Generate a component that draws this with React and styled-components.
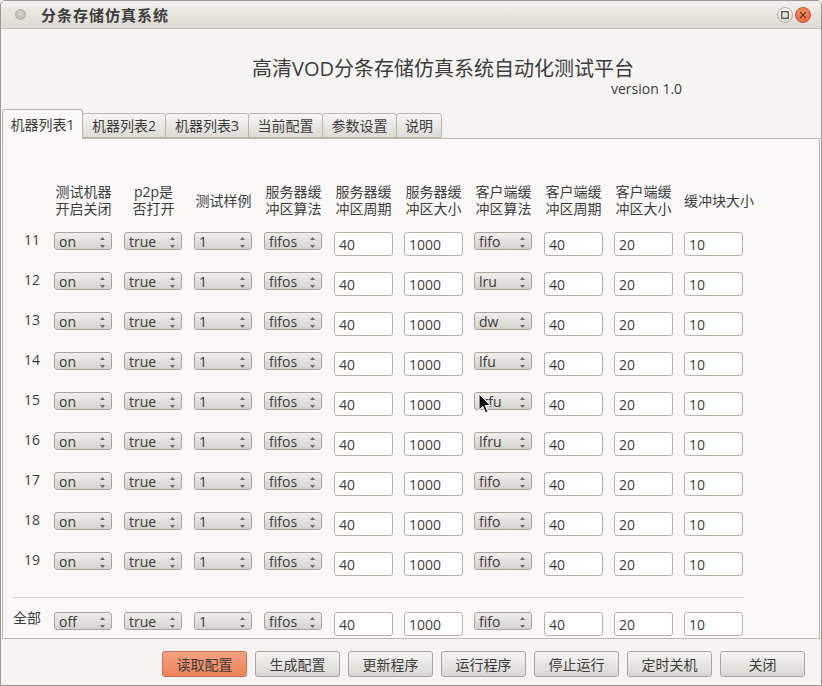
import React from 'react';
import styled, { createGlobalStyle } from 'styled-components';

const FONT = `"Open Sans", "Noto Sans CJK SC", sans-serif`;

const Global = createGlobalStyle`
  html, body { margin: 0; padding: 0; background: #f5f4f2; }
  body { font-family: ${FONT}; color: #3c3c3c; }
  * { box-sizing: border-box; }
`;

const Window = styled.div`
  position: relative;
  width: 822px;
  height: 686px;
  border: 1px solid #9d9890;
  border-radius: 5px 5px 0 0;
  background: #f5f4f2;
  display: flex;
  flex-direction: column;
  overflow: hidden;
`;

const TitleBar = styled.div`
  height: 28px;
  flex: none;
  display: flex;
  align-items: center;
  padding: 0 10px 0 14px;
  background: linear-gradient(#f2f0ed, #dedad3);
  border-bottom: 1px solid #c4bfb6;
`;

const Dot = styled.span`
  width: 11px;
  height: 11px;
  border-radius: 50%;
  background: radial-gradient(circle at 50% 40%, #d8d6d2, #b3b0aa);
  border: 1px solid #b0ada7;
  margin-right: 15px;
`;

const TitleText = styled.span`
  font-weight: 700;
  font-size: 15px;
  letter-spacing: 1px;
  color: #3c3c3c;
  line-height: 20px;
`;

const WinControls = styled.div`
  margin-left: auto;
  display: flex;
  gap: 2px;
  align-items: center;
`;

const RoundBtn = styled.span`
  width: 16px;
  height: 16px;
  border-radius: 50%;
  display: flex;
  align-items: center;
  justify-content: center;
  border: 1px solid ${p => (p.$close ? '#c65430' : '#b4b0a8')};
  background: ${p =>
    p.$close
      ? 'radial-gradient(circle at 50% 35%, #f7936a, #e45d2f)'
      : 'linear-gradient(#f9f8f6, #dcd9d3)'};
`;

const Header = styled.div`
  flex: none;
  padding-left: 251px;
  margin-top: 28px;
  font-size: 20px;
  line-height: 24px;
  white-space: nowrap;
`;

const Version = styled.div`
  flex: none;
  padding-left: 610px;
  font-size: 14px;
  line-height: 15px;
  white-space: nowrap;
`;

const TabBar = styled.div`
  flex: none;
  margin-top: 13px;
  height: 29px;
  display: flex;
  align-items: flex-end;
  padding-left: 1px;
`;

const Tab = styled.div`
  position: relative;
  width: ${p => p.$w}px;
  height: ${p => (p.$active ? 30 : 25)}px;
  margin-right: -1px;
  margin-bottom: ${p => (p.$active ? -1 : 0)}px;
  z-index: ${p => (p.$active ? 2 : 1)};
  border: 1px solid #b9b4ac;
  border-bottom: ${p => (p.$active ? 'none' : '1px solid #b9b4ac')};
  border-radius: 3px 3px 0 0;
  background: ${p => (p.$active ? '#faf9f8' : 'linear-gradient(#f6f5f3, #dedbd6)')};
  display: flex;
  align-items: center;
  justify-content: center;
  padding-bottom: ${p => (p.$active ? 2 : 1)}px;
  font-size: 14px;
  white-space: nowrap;
`;

const Pane = styled.div`
  flex: none;
  margin: 0 1px;
  height: 501px;
  border: 1px solid #bcb7af;
  background: #faf9f8;
  padding: 44px 0 0 10px;
  display: flex;
  flex-direction: column;
`;

const GridRow = styled.div`
  display: grid;
  grid-template-columns: 30px repeat(10, 59px);
  column-gap: 11px;
  align-items: ${p => (p.$head ? 'center' : 'start')};
  height: ${p => (p.$head ? 34 : 24)}px;
  margin-bottom: ${p => (p.$head ? 15 : p.$last ? 0 : 16)}px;
`;

const HeadCell = styled.div`
  font-size: 14px;
  line-height: 17px;
  color: #3c3c3c;
  text-align: ${p => (p.$left ? 'left' : 'center')};
  white-space: nowrap;
`;

const RowLabel = styled.div`
  font-size: 14px;
  line-height: 17px;
  padding-left: ${p => p.$indent}px;
  margin-top: ${p => p.$dy}px;
  white-space: nowrap;
`;

const Combo = styled.div`
  position: relative;
  width: 58px;
  height: 18px;
  border: 1px solid #a8a49c;
  border-radius: 3px;
  background: linear-gradient(#efeeeb, #d6d3ce);
  font-size: 14px;
  line-height: 15px;
  padding-left: 4px;
  display: flex;
  align-items: center;
  white-space: nowrap;
`;

const ComboArrows = styled.svg`
  position: absolute;
  right: 5px;
  top: 2px;
`;

const Field = styled.input`
  width: 59px;
  height: 24px;
  border: 1px solid #b6b0a7;
  border-radius: 3px;
  background: #fff;
  font-family: ${FONT};
  font-size: 14px;
  color: #3c3c3c;
  padding: 1px 0 0 4px;
  margin: 0;
  outline: none;
`;

const Separator = styled.div`
  width: 731px;
  height: 1px;
  background: #d3cec7;
  margin: 5px 0 14px 0;
`;

const ButtonRow = styled.div`
  flex: none;
  margin-top: 12px;
  display: flex;
  justify-content: flex-end;
  gap: 8px;
  padding-right: 16px;
`;

const Button = styled.div`
  width: 85px;
  height: 26px;
  border: 1px solid ${p => (p.$primary ? '#c9704e' : '#a9a59d')};
  border-radius: 3px;
  background: ${p =>
    p.$primary ? 'linear-gradient(#f6a382, #ed8259)' : 'linear-gradient(#f6f5f3, #dad7d2)'};
  display: flex;
  align-items: center;
  justify-content: center;
  font-size: 14px;
  white-space: nowrap;
`;

const Cursor = styled.svg`
  position: absolute;
  left: 477px;
  top: 392px;
  pointer-events: none;
`;

const ComboBox = ({ value }) => (
  <Combo>
    {value}
    <ComboArrows width="7" height="14" viewBox="0 0 7 14">
      <path d="M1 5 L3.5 2 L6 5 Z" fill="#6a6864" />
      <path d="M1 10 L3.5 13 L6 10 Z" fill="#6a6864" />
    </ComboArrows>
  </Combo>
);

const headers = [
  ['测试机器', '开启关闭'],
  ['p2p是', '否打开'],
  ['测试样例'],
  ['服务器缓', '冲区算法'],
  ['服务器缓', '冲区周期'],
  ['服务器缓', '冲区大小'],
  ['客户端缓', '冲区算法'],
  ['客户端缓', '冲区周期'],
  ['客户端缓', '冲区大小'],
  ['缓冲块大小'],
];

const clientAlg = ['fifo', 'lru', 'dw', 'lfu', 'lrfu', 'lfru', 'fifo', 'fifo', 'fifo'];

const rows = clientAlg.map((alg, i) => ({
  label: String(11 + i),
  onoff: 'on',
  alg,
}));

const tabs = [
  { t: '机器列表1', w: 81, active: true },
  { t: '机器列表2', w: 84 },
  { t: '机器列表3', w: 84 },
  { t: '当前配置', w: 75 },
  { t: '参数设置', w: 75 },
  { t: '说明', w: 46 },
];

const buttons = ['读取配置', '生成配置', '更新程序', '运行程序', '停止运行', '定时关机', '关闭'];

const DataCells = ({ onoff, alg }) => (
  <>
    <ComboBox value={onoff} />
    <ComboBox value="true" />
    <ComboBox value="1" />
    <ComboBox value="fifos" />
    <Field readOnly defaultValue="40" />
    <Field readOnly defaultValue="1000" />
    <ComboBox value={alg} />
    <Field readOnly defaultValue="40" />
    <Field readOnly defaultValue="20" />
    <Field readOnly defaultValue="10" />
  </>
);

export default function App() {
  return (
    <>
      <Global />
      <Window>
        <TitleBar>
          <Dot />
          <TitleText>分条存储仿真系统</TitleText>
          <WinControls>
            <RoundBtn>
              <svg width="8" height="8" viewBox="0 0 8 8">
                <rect x="0.75" y="0.75" width="6.5" height="6.5" fill="none" stroke="#4a4a4a" strokeWidth="1.2" />
              </svg>
            </RoundBtn>
            <RoundBtn $close>
              <svg width="8" height="8" viewBox="0 0 8 8">
                <path d="M1.2 1.2 L6.8 6.8 M6.8 1.2 L1.2 6.8" stroke="#4a2e22" strokeWidth="1.2" />
              </svg>
            </RoundBtn>
          </WinControls>
        </TitleBar>

        <Header>高清VOD分条存储仿真系统自动化测试平台</Header>
        <Version>version 1.0</Version>

        <TabBar>
          {tabs.map(tb => (
            <Tab key={tb.t} $w={tb.w} $active={tb.active}>
              {tb.t}
            </Tab>
          ))}
        </TabBar>

        <Pane>
          <GridRow $head>
            <span />
            {headers.map((h, i) => (
              <HeadCell key={i} $left={i === headers.length - 1}>
                {h.map((line, j) => (
                  <div key={j}>{line}</div>
                ))}
              </HeadCell>
            ))}
          </GridRow>

          {rows.map(r => (
            <GridRow key={r.label}>
              <RowLabel $indent={11} $dy={-1}>{r.label}</RowLabel>
              <DataCells onoff={r.onoff} alg={r.alg} />
            </GridRow>
          ))}

          <Separator />

          <GridRow $last>
            <RowLabel $indent={0} $dy={-3}>全部</RowLabel>
            <DataCells onoff="off" alg="fifo" />
          </GridRow>
        </Pane>

        <ButtonRow>
          {buttons.map((b, i) => (
            <Button key={b} $primary={i === 0}>
              {b}
            </Button>
          ))}
        </ButtonRow>

        <Cursor width="14" height="22" viewBox="0 0 14 22">
          <path
            d="M1 1 L1 17 L4.8 13.4 L7.6 20 L10 19 L7.3 12.6 L12.4 12.6 Z"
            fill="#111"
            stroke="#fff"
            strokeWidth="1"
            strokeLinejoin="round"
          />
        </Cursor>
      </Window>
    </>
  );
}
